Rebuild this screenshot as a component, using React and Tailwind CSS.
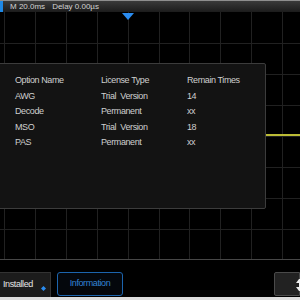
import React from "react";

const font = { fontFamily: '"Liberation Sans", Arial, sans-serif' };

function Grid() {
  const vs = [];
  for (let i = 0; i < 10; i++) vs.push(Math.round(4 + i * 30.9) + 0.5);
  const hs = [31, 62, 93, 124, 155, 186, 217].map((y) => y + 0.5);
  return (
    <svg className="absolute inset-0" width="300" height="248" viewBox="0 0 300 248">
      {vs.map((x) => (
        <line key={"v" + x} x1={x} y1="0" x2={x} y2="247" stroke="#212121" strokeWidth="1" />
      ))}
      {hs.map((y) => (
        <line key={"h" + y} x1="0" y1={y} x2="300" y2={y} stroke="#212121" strokeWidth="1" />
      ))}
      <rect x="0" y="122" width="300" height="2" fill="#bcbc36" />
    </svg>
  );
}

const rows = [
  ["Option Name", "License Type", "Remain Times"],
  ["AWG", "Trial\u00a0 Version", "14"],
  ["Decode", "Permanent", "xx"],
  ["MSO", "Trial\u00a0 Version", "18"],
  ["PAS", "Permanent", "xx"],
];

export default function App() {
  return (
    <div className="w-[300px] h-[300px] bg-black flex flex-col overflow-hidden" style={font}>
      <div className="h-[12px] shrink-0 flex border-t border-[#8e8e8e] bg-gradient-to-b from-[#3a3a3a] to-[#1c1c1c]">
        <div className="w-[3px] h-full bg-[#1e88e5]" />
        <div className="flex items-center text-[8px] leading-none text-[#d2d2d2] pl-[7px]">
          <span>M 20.0ms</span>
          <span className="ml-[7px]">Delay 0.00µs</span>
        </div>
      </div>

      <div className="relative h-[248px] shrink-0 border-b border-[#474747]">
        <Grid />
        <svg className="absolute left-[122px] top-[1px]" width="12" height="7" viewBox="0 0 12 7">
          <polygon points="0,0 12,0 6,7" fill="#2a8cf0" />
        </svg>
        <div className="absolute left-[-2px] top-[51px] w-[268px] h-[146px] bg-[#131313] border border-[#3c3c3c] rounded-[2px] pt-[9px] pl-[16px]">
          {rows.map((r, i) => (
            <div key={i} className="flex h-[15.5px] items-center text-[9px] tracking-[-0.4px] text-[#cfcfcf]">
              <span className="w-[86px]">{r[0]}</span>
              <span className="w-[86px] whitespace-pre">{r[1]}</span>
              <span>{r[2]}</span>
            </div>
          ))}
        </div>
      </div>

      <div className="h-[37px] shrink-0 flex items-end justify-between">
        <div className="flex items-end gap-[6px]">
          <div className="relative w-[51px] h-[25px] bg-[#1c1c1c] border-t border-r border-[#333] flex items-center pl-[3px] text-[9px] tracking-[-0.4px] text-[#e6e6e6]">
            Installed
            <svg className="absolute left-[41px] top-[13px]" width="5" height="5" viewBox="0 0 5 5">
              <polygon points="2.5,0 5,2.5 2.5,5 0,2.5" fill="#2a8cf0" />
            </svg>
          </div>
          <div className="w-[66px] h-[24px] mb-[1px] rounded-[3px] border-[1.5px] border-[#1c64ad] bg-[#04070c] flex items-center justify-center text-[9px] tracking-[-0.4px] text-[#3383d6]">
            Information
          </div>
        </div>
        <div className="relative w-[26px] h-[24px] mb-[1px] bg-[#222] border border-[#4a4a4a] rounded-l-[2px]">
          <svg className="absolute left-[20px] top-[6px]" width="5" height="12" viewBox="0 0 5 12">
            <polygon points="4,0 5,0 5,12 4,12 1,8 4,8 4,4 1,4" fill="#f0f0f0" />
          </svg>
        </div>
      </div>

      <div className="h-[3px] shrink-0 bg-[#dedede]" />
    </div>
  );
}
